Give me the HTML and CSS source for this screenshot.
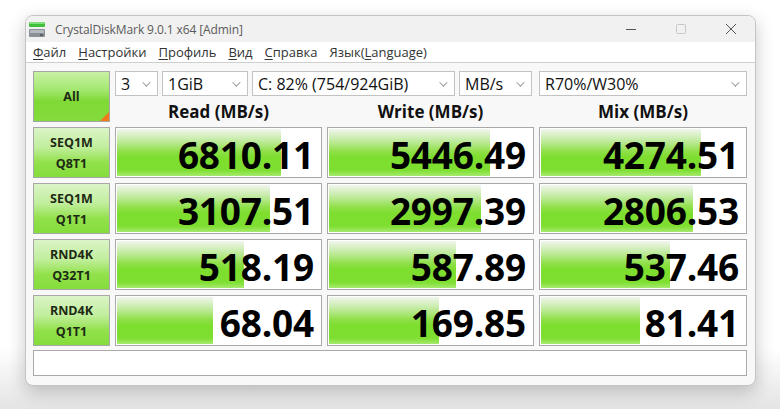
FILE: index.html
```html
<!DOCTYPE html>
<html lang="ru">
<head>
    <meta charset="UTF-8">
    <title>CrystalDiskMark 9.0.1 x64 [Admin]</title>
    <link rel="stylesheet" href="styles.css">
</head>
<body>
    <div class="window">
        <!-- Title bar -->
        <div class="titlebar">
            <svg class="app-icon" width="18" height="17" viewBox="0 0 18 17">
                <rect x="1" y="1" width="16" height="5" rx="1" fill="#3fbf3a"/>
                <rect x="1" y="1" width="16" height="2" rx="1" fill="#7fe07a"/>
                <rect x="1" y="8" width="16" height="8" rx="1" fill="#8a9096"/>
                <rect x="2" y="9" width="14" height="3" fill="#b4babf"/>
                <rect x="12" y="13" width="3" height="2" fill="#5a6066"/>
            </svg>
            <span class="title">CrystalDiskMark 9.0.1 x64 [Admin]</span>
            <div class="controls">
                <svg width="12" height="12" viewBox="0 0 12 12"><path d="M1 6.5h10" stroke="#555" stroke-width="1"/></svg>
                <svg width="12" height="12" viewBox="0 0 12 12"><rect x="1.5" y="1.5" width="9" height="9" rx="1" fill="none" stroke="#c8c8c8"/></svg>
                <svg width="12" height="12" viewBox="0 0 12 12"><path d="M1 1l10 10M11 1L1 11" stroke="#555" stroke-width="1"/></svg>
            </div>
        </div>

        <!-- Menu -->
        <div class="menubar">
            <span><u>Ф</u>айл</span>
            <span><u>Н</u>астройки</span>
            <span><u>П</u>рофиль</span>
            <span><u>В</u>ид</span>
            <span><u>С</u>правка</span>
            <span>Язык(<u>L</u>anguage)</span>
        </div>

        <!-- Main grid -->
        <div class="main">
            <button class="all">All</button>
            <div class="selects">
                <div class="select s-count">3<span class="chev"></span></div>
                <div class="select s-size">1GiB<span class="chev"></span></div>
                <div class="select s-drive">C: 82% (754/924GiB)<span class="chev"></span></div>
                <div class="select s-unit">MB/s<span class="chev"></span></div>
            </div>
            <div class="select s-mix">R70%/W30%<span class="chev"></span></div>

            <div class="head">Read (MB/s)</div>
            <div class="head">Write (MB/s)</div>
            <div class="head">Mix (MB/s)</div>

            <div class="test">SEQ1M<br>Q8T1</div>
            <div class="cell"><div class="bar" style="width: 80%"></div><span>6810.11</span></div>
            <div class="cell"><div class="bar" style="width: 78.5%"></div><span>5446.49</span></div>
            <div class="cell"><div class="bar" style="width: 77.5%"></div><span>4274.51</span></div>

            <div class="test">SEQ1M<br>Q1T1</div>
            <div class="cell"><div class="bar" style="width: 74.5%"></div><span>3107.51</span></div>
            <div class="cell"><div class="bar" style="width: 74%"></div><span>2997.39</span></div>
            <div class="cell"><div class="bar" style="width: 74%"></div><span>2806.53</span></div>

            <div class="test">RND4K<br>Q32T1</div>
            <div class="cell"><div class="bar" style="width: 62%"></div><span>518.19</span></div>
            <div class="cell"><div class="bar" style="width: 62%"></div><span>587.89</span></div>
            <div class="cell"><div class="bar" style="width: 62.5%"></div><span>537.46</span></div>

            <div class="test">RND4K<br>Q1T1</div>
            <div class="cell"><div class="bar" style="width: 47%"></div><span>68.04</span></div>
            <div class="cell"><div class="bar" style="width: 53.5%"></div><span>169.85</span></div>
            <div class="cell"><div class="bar" style="width: 48%"></div><span>81.41</span></div>

            <div class="comment"></div>
        </div>
    </div>
</body>
</html>
```

FILE: styles.css
```css
body {
    margin: 0;
    width: 780px;
    height: 409px;
    background: linear-gradient(to bottom, #ffffff 85%, #e4e4e4);
    font-family: "Open Sans", "Noto Sans", sans-serif;
    overflow: hidden;
}

/* Window */
.window {
    margin: 15px 0 0 25px;
    width: 729px;
    height: 369px;
    border: 1px solid #c4c4c4;
    border-radius: 8px;
    background: #f8f8f8;
    box-shadow: 0 6px 18px rgba(0, 0, 0, 0.22);
    overflow: hidden;
}

.titlebar {
    display: flex;
    align-items: center;
    height: 26px;
    background: #f1f1f1;
    padding-left: 2px;
}

.app-icon {
    margin-right: 9px;
}

.title {
    font-size: 12px;
    letter-spacing: -0.1px;
    color: #5a5a5a;
}

.controls {
    margin-left: auto;
    display: flex;
    gap: 38px;
    padding-right: 18px;
}

.menubar {
    display: flex;
    gap: 12px;
    height: 20px;
    align-items: center;
    padding-left: 7px;
    background: #fff;
    border-bottom: 1px solid #cfcfcf;
    font-size: 13px;
    color: #333;
}

.menubar u {
    text-decoration-thickness: 1px;
    text-underline-offset: 2px;
}

/* Main grid */
.main {
    display: grid;
    grid-template-columns: 77px 207px 207px 208px;
    grid-template-rows: 25px 21px 51px 51px 51px 51px 26px;
    gap: 5px;
    padding: 8px 0 0 7px;
}

.all {
    grid-row: 1 / 3;
    position: relative;
    border: 1px solid #a5a5a5;
    background: linear-gradient(to bottom, #c8f1a4 0%, #a6e873 35%, #7fd935 60%, #84db3c 100%);
    font-family: inherit;
    font-weight: bold;
    font-size: 12.5px;
    color: #1d2a14;
    padding: 0;
}

.all::after {
    content: "";
    position: absolute;
    right: 0;
    bottom: 0;
    border-style: solid;
    border-width: 0 0 9px 9px;
    border-color: transparent transparent #f07a1a transparent;
}

.selects {
    grid-column: 2 / 4;
    display: flex;
    gap: 4px;
    padding-right: 2px;
}

.select {
    position: relative;
    display: flex;
    align-items: center;
    box-sizing: border-box;
    height: 25px;
    padding-left: 5px;
    background: #fff;
    border: 1px solid #c2c2c2;
    font-size: 16px;
    color: #111;
}

.s-count { width: 43px; }
.s-size { width: 86px; }
.s-drive { flex: 1; }
.s-unit { width: 73px; }

.chev {
    margin-left: auto;
    margin-right: 9px;
    width: 5px;
    height: 5px;
    border-right: 1px solid #999;
    border-bottom: 1px solid #999;
    transform: rotate(45deg) translateY(-2px);
}

.head {
    display: flex;
    align-items: center;
    justify-content: center;
    font-weight: bold;
    font-size: 17px;
    color: #111;
}

/* Test buttons */
.test {
    display: flex;
    align-items: center;
    justify-content: center;
    text-align: center;
    border: 1px solid #a8a8a8;
    background: linear-gradient(to bottom, #dbf4c8 0%, #c1ee9c 40%, #92e14c 70%, #84dd3a 100%);
    font-weight: bold;
    font-size: 12.5px;
    line-height: 21px;
    color: #1d2a14;
}

/* Result cells */
.cell {
    position: relative;
    display: flex;
    align-items: center;
    justify-content: flex-end;
    border: 1px solid #a9a9a9;
    background: #fff;
    padding-right: 7px;
}

.bar {
    position: absolute;
    left: 1px;
    top: 1px;
    bottom: 1px;
    background: linear-gradient(to bottom, #f2f6ee 0%, #c7ecaa 22%, #8fe048 48%, #7dde2e 60%, #7fdf31 88%, #a6e970 100%);
}

.cell span {
    position: relative;
    font-weight: bold;
    font-size: 37px;
    color: #000;
    letter-spacing: -0.2px;
    margin-top: 3px;
}

.comment {
    grid-column: 1 / -1;
    height: 26px;
    box-sizing: border-box;
    margin-top: -1px;
    border: 1px solid #a9a9a9;
    background: #fff;
}
```
